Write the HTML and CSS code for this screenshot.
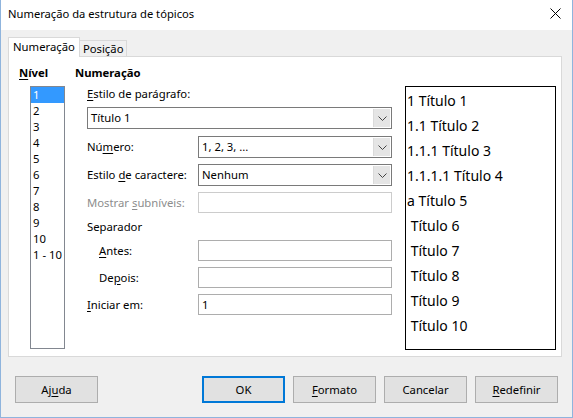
FILE: index.html
```html
<!DOCTYPE html>
<html lang="pt">
<head>
<meta charset="utf-8">
<title>Numeração da estrutura de tópicos</title>
<link rel="stylesheet" href="styles.css">
</head>
<body>
<div class="window">
  <div class="titlebar">
    <span class="title">Numeração da estrutura de tópicos</span>
    <svg class="close" width="11" height="11" viewBox="0 0 11 11"><path d="M0.5 0.5 L10.5 10.5 M10.5 0.5 L0.5 10.5" stroke="#000" stroke-width="1" fill="none"/></svg>
  </div>
  <div class="body">
    <div class="tabs">
      <div class="tab active">Numeração</div>
      <div class="tab">Posição</div>
    </div>
    <div class="panel">
      <div class="level-col">
        <div class="heading"><u>N</u>ível</div>
        <div class="listbox">
          <div class="item selected">1</div>
          <div class="item">2</div>
          <div class="item">3</div>
          <div class="item">4</div>
          <div class="item">5</div>
          <div class="item">6</div>
          <div class="item">7</div>
          <div class="item">8</div>
          <div class="item">9</div>
          <div class="item">10</div>
          <div class="item">1 - 10</div>
        </div>
      </div>
      <div class="num-col">
        <div class="heading">Numeração</div>
        <div class="label top-label"><u>E</u>stilo de parágrafo:</div>
        <div class="select wide"><span class="value">Título 1</span><span class="arrow"><svg width="9" height="5" viewBox="0 0 9 5"><path d="M0.5 0.5 L4.5 4.5 L8.5 0.5" stroke="#444" fill="none"/></svg></span></div>
        <div class="form">
          <div class="label">Nú<u>m</u>ero:</div>
          <div class="select"><span class="value">1, 2, 3, ...</span><span class="arrow"><svg width="9" height="5" viewBox="0 0 9 5"><path d="M0.5 0.5 L4.5 4.5 L8.5 0.5" stroke="#444" fill="none"/></svg></span></div>
          <div class="label">Estilo <u>d</u>e caractere:</div>
          <div class="select"><span class="value">Nenhum</span><span class="arrow"><svg width="9" height="5" viewBox="0 0 9 5"><path d="M0.5 0.5 L4.5 4.5 L8.5 0.5" stroke="#444" fill="none"/></svg></span></div>
          <div class="label disabled">Mostrar <u>s</u>ubníveis:</div>
          <div class="input disabled"></div>
          <div class="label section">Separador</div>
          <div class="label indent"><u>A</u>ntes:</div>
          <div class="input"></div>
          <div class="label indent">De<u>p</u>ois:</div>
          <div class="input"></div>
          <div class="label"><u>I</u>niciar em:</div>
          <div class="input"><span class="value">1</span></div>
        </div>
      </div>
      <div class="preview">
        <div class="line">1 Título 1</div>
        <div class="line">1.1 Título 2</div>
        <div class="line">1.1.1 Título 3</div>
        <div class="line">1.1.1.1 Título 4</div>
        <div class="line">a Título 5</div>
        <div class="line"> Título 6</div>
        <div class="line"> Título 7</div>
        <div class="line"> Título 8</div>
        <div class="line"> Título 9</div>
        <div class="line"> Título 10</div>
      </div>
    </div>
    <div class="buttons">
      <div class="btn">Aj<u>u</u>da</div>
      <div class="spacer"></div>
      <div class="btn default">OK</div>
      <div class="btn"><u>F</u>ormato</div>
      <div class="btn">Cancelar</div>
      <div class="btn"><u>R</u>edefinir</div>
    </div>
  </div>
</div>
</body>
</html>
```
FILE: styles.css
```css
* { box-sizing: border-box; }
html, body { margin: 0; padding: 0; }
body {
  font-family: "Noto Sans", "Open Sans", sans-serif;
  font-size: 11.3px;
  color: #000;
  background: #f0f0f0;
}
u { text-decoration: underline; text-underline-offset: 2px; }
.window {
  width: 573px;
  height: 418px;
  border: 1px solid #8fb4dd;
  border-top: none;
  display: flex;
  flex-direction: column;
  background: #f0f0f0;
}
.titlebar {
  height: 30px;
  background: #fff;
  display: flex;
  align-items: center;
  padding-left: 7px;
  padding-right: 11px;
  flex: none;
}
.title { flex: 1; font-size: 11.2px; line-height: 16px; padding-bottom: 3px; }
.close { display: block; margin-bottom: 3px; }
.body { flex: 1; padding: 7px 10px 0 7px; display: flex; flex-direction: column; }
.tabs { display: flex; align-items: flex-end; height: 19px; }
.tab {
  height: 16px;
  line-height: 15px;
  padding: 0 3px;
  border: 1px solid #d9d9d9;
  border-bottom: none;
  border-left: none;
  background: #f0f0f0;
}
.tab.active {
  height: 20px;
  line-height: 17px;
  padding: 0 4px 0 4px;
  background: #fff;
  border-left: 1px solid #d9d9d9;
  position: relative;
  z-index: 1;
  margin-bottom: -1px;
}
.panel {
  height: 301px;
  width: 554px;
  background: #fff;
  border: 1px solid #d9d9d9;
  display: flex;
  padding: 8px 0 0 10px;
}
.heading { font-weight: bold; line-height: 16px; height: 16px; }
.level-col { width: 56px; flex: none; }
.listbox {
  margin: 5px 0 0 11px;
  width: 35px;
  height: 263px;
  border: 1px solid #828790;
  padding: 0;
}
.item { height: 16px; line-height: 16px; padding-left: 2px; }
.item.selected { background: #3399ff; color: #fff; }
.num-col { width: 330px; flex: none; }
.label { line-height: 16px; white-space: nowrap; }
.top-label { margin: 5px 0 0 12px; }
.select, .input {
  height: 22px;
  border: 1px solid #7a7a7a;
  background: #fff;
  display: flex;
  align-items: center;
  padding: 1px;
}
.input { height: 21px; border-color: #adadad; }
.input.disabled { border-color: #cccccc; }
.select.wide { margin: 5px 0 0 12px; width: 305px; }
.value { flex: 1; padding-left: 2px; line-height: 16px; }
.arrow {
  width: 17px;
  height: 18px;
  background: #e5e5e5;
  border-left: 1px solid #dadada;
  display: flex;
  align-items: center;
  justify-content: center;
}
.form {
  margin: 7px 0 0 12px;
  display: grid;
  grid-template-columns: 111px 194px;
  grid-auto-rows: auto;
  row-gap: 6px;
  align-items: center;
}
.label.disabled { color: #8d8d8d; }
.label.section { grid-column: 1 / 3; line-height: 15px; }
.label.indent { padding-left: 12px; }
.preview {
  margin-top: 21px;
  margin-left: 0;
  width: 151px;
  height: 264px;
  border: 1px solid #000;
  padding: 1px 0 0 1px;
  font-size: 14px;
}
.line { line-height: 25px; white-space: pre; }
.buttons {
  display: flex;
  padding: 19px 4px 0 7px;
  gap: 8px;
}
.spacer { flex: 1; }
.btn {
  width: 83px;
  height: 27px;
  background: #e1e1e1;
  border: 1px solid #adadad;
  display: flex;
  align-items: center;
  justify-content: center;
}
.btn.default { border: 2px solid #0078d7; }
```
